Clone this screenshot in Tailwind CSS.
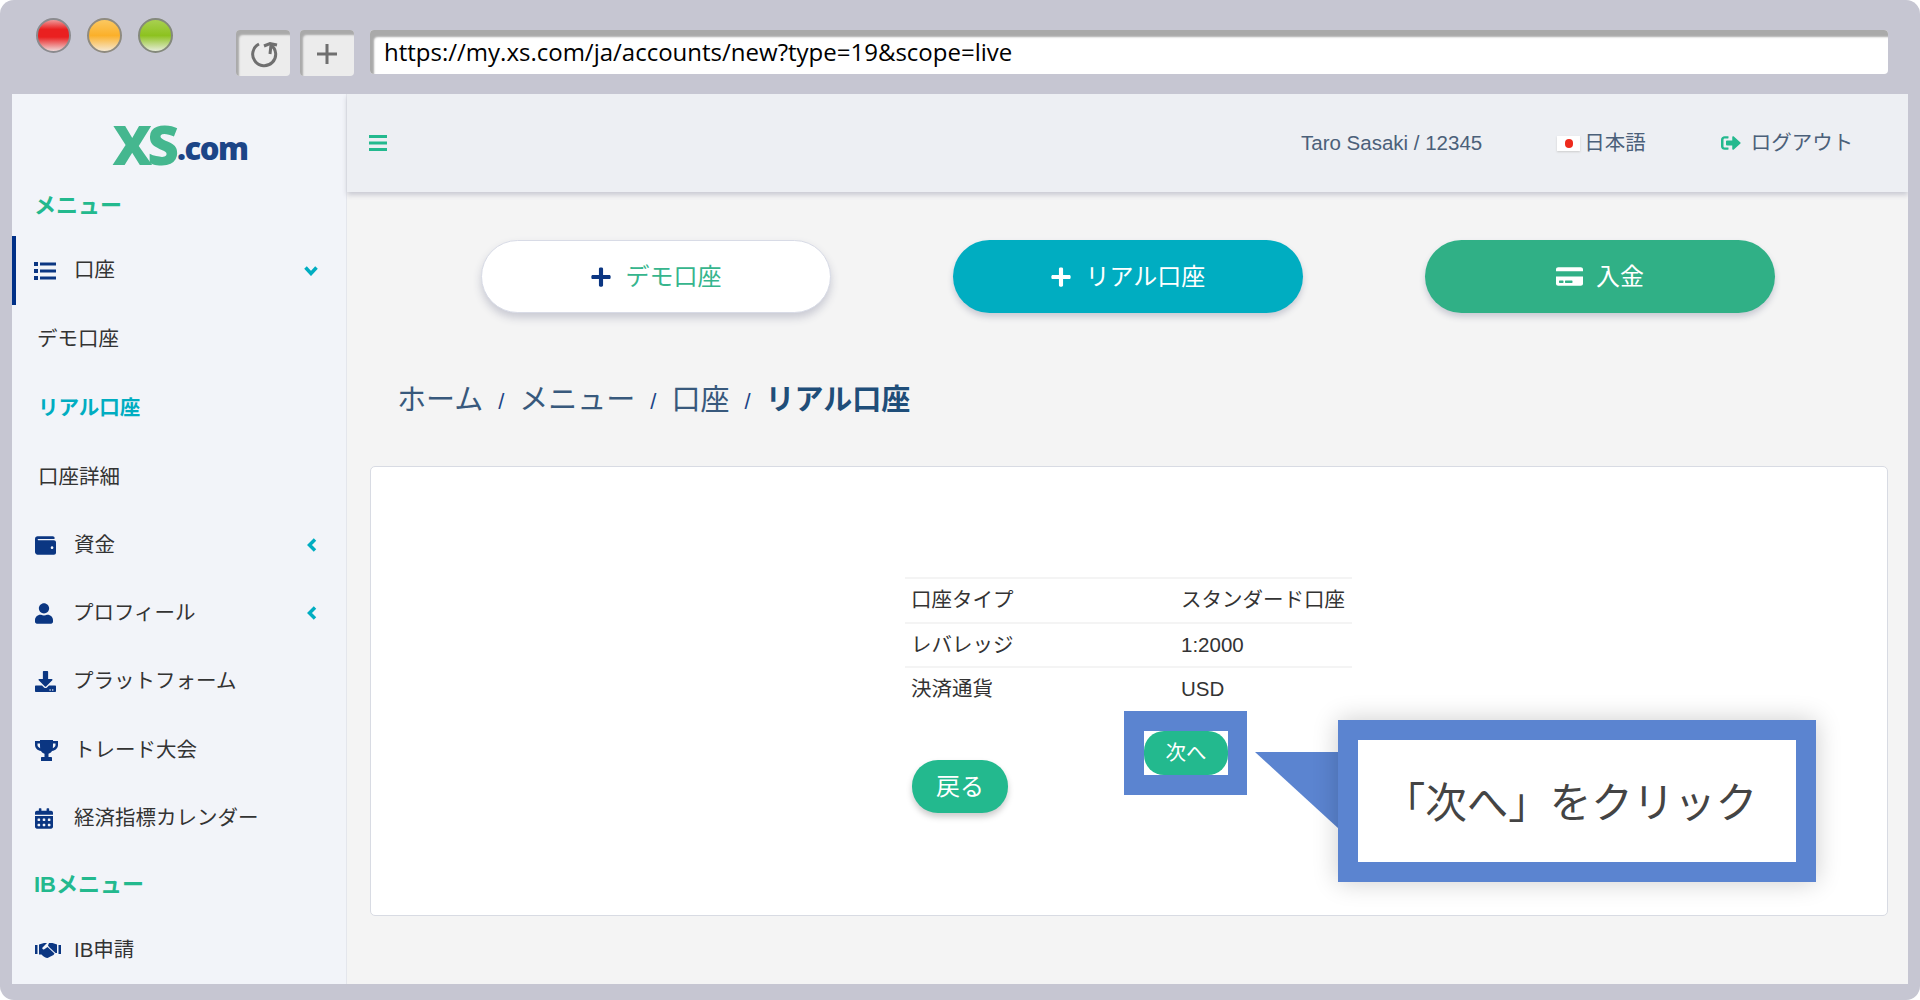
<!DOCTYPE html>
<html lang="ja">
  <head>
    <meta charset="UTF-8" />
    <title>XS.com</title>
    <script src="https://cdn.jsdelivr.net/npm/@tailwindcss/browser@4"></script>
  </head>
  <body class="bg-white font-['Liberation_Sans','Noto_Sans_CJK_JP',sans-serif]">
    <div class="w-[1920px] h-[1000px] bg-[#c6c6d2] rounded-[14px] overflow-hidden flex flex-col">
      <!-- browser chrome -->
      <div class="h-[94px] shrink-0 flex items-start relative">
        <div class="flex gap-[16px] ml-[36px] mt-[18px]">
          <div class="w-[35px] h-[35px] rounded-full border-2 border-[#8b8b8f] bg-[linear-gradient(#e99_0%,#ea2020_30%,#ea2020_55%,#f0d8d8_100%)]"></div>
          <div class="w-[35px] h-[35px] rounded-full border-2 border-[#8f8b80] bg-[linear-gradient(#fbc860_0%,#fbb02a_50%,#f6e8d0_100%)]"></div>
          <div class="w-[35px] h-[35px] rounded-full border-2 border-[#84897c] bg-[linear-gradient(#a8d050_0%,#8dc21f_50%,#e6ecd8_100%)]"></div>
        </div>
        <div class="ml-[63px] mt-[30px] w-[54px] h-[46px] rounded-[4px] bg-[#ececec] shadow-[inset_3px_5px_2px_#aaaaaa] flex items-center justify-center pt-[2px] pl-[3px]">
          <svg class="w-[32px] h-[32px]" viewBox="0 0 32 32" fill="none" stroke="#6f6f6f" stroke-width="3">
            <path d="M10 6A11.500 11.500 0 1 0 22 7l-1 9" />
            <path d="M15 8l6-2.500 7 1.500" />
          </svg>
        </div>
        <div class="ml-[10px] mt-[30px] w-[54px] h-[46px] rounded-[4px] bg-[#ececec] shadow-[inset_3px_5px_2px_#aaaaaa] flex items-center justify-center pt-[2px]">
          <svg class="w-[24px] h-[24px]" viewBox="0 0 24 24" fill="none" stroke="#6f6f6f" stroke-width="3">
            <path d="M12 2v20M2 12h20" />
          </svg>
        </div>
        <div class="ml-[16px] mt-[30px] w-[1518px] h-[44px] rounded-[4px] bg-white shadow-[inset_4px_7px_2px_#aaaaaa] flex items-center pl-[14px] font-['Open_Sans',sans-serif] text-[24px] text-black">
          https://my.xs.com/ja/accounts/new?type=19&amp;scope=live
        </div>
      </div>

      <div class="flex mx-[12px] h-[890px] shrink-0 overflow-hidden">
        <!-- sidebar -->
        <aside class="w-[335px] shrink-0 bg-[#f2f4f9] border-r border-[#e4e6ec] flex flex-col text-[20.5px] text-[#333333]">
          <div class="h-[91px] shrink-0 flex items-end justify-center pb-[21px] pl-[2px] font-['Open_Sans',sans-serif] font-extrabold leading-none">
            <span class="text-[55px] text-[#45b78f] tracking-[-5px] leading-[40px]">XS</span><span class="text-[31px] text-[#1c4587] tracking-[-1.5px] ml-[3px]">.com</span>
          </div>
          <div class="h-[40px] mb-[11px] shrink-0 flex items-center pl-[22px] text-[22px] font-bold text-[#23b98e]">メニュー</div>

          <div class="h-[69px] shrink-0 flex items-center border-l-4 border-[#003087] pl-[18px]">
            <svg class="w-[22px] h-[18px] mr-[18px]" viewBox="0 0 22 18" fill="#0b3682">
              <rect x="0" y="0" width="4" height="4" />
              <rect x="6" y="0.5" width="16" height="3" />
              <rect x="0" y="7" width="4" height="4" />
              <rect x="6" y="7.5" width="16" height="3" />
              <rect x="0" y="14" width="4" height="4" />
              <rect x="6" y="14.5" width="16" height="3" />
            </svg>
            <span>口座</span>
            <svg class="w-[14px] h-[10px] ml-auto mr-[28px]" viewBox="0 0 14 10" fill="none" stroke="#00adc1" stroke-width="3.5">
              <path d="M1.5 1.5L7 7.5l5.5-6" />
            </svg>
          </div>
          <div class="h-[68px] shrink-0 flex items-center pl-[25px]">デモ口座</div>
          <div class="h-[70px] shrink-0 flex items-center pl-[26px] font-bold text-[#00adc1]">リアル口座</div>
          <div class="h-[68px] shrink-0 flex items-center pl-[26px]">口座詳細</div>

          <div class="h-[68px] shrink-0 flex items-center pl-[23px]">
            <svg class="w-[21px] h-[21px] mr-[18px]" viewBox="0 0 512 512" fill="#0b3682">
              <path d="M461.2 128H80c-8.84 0-16-7.16-16-16s7.16-16 16-16h384c8.84 0 16-7.16 16-16 0-26.51-21.49-48-48-48H64C28.65 32 0 60.65 0 96v320c0 35.35 28.65 64 64 64h397.2c28.02 0 50.8-21.53 50.8-48V176c0-26.47-22.78-48-50.8-48zM416 340c-17.67 0-32-14.33-32-32s14.33-32 32-32 32 14.33 32 32-14.33 32-32 32z" />
            </svg>
            <span>資金</span>
            <svg class="w-[10px] h-[14px] ml-auto mr-[29px]" viewBox="0 0 10 14" fill="none" stroke="#00adc1" stroke-width="3.5">
              <path d="M8 1.5L2.500 7 8 12.500" />
            </svg>
          </div>
          <div class="h-[68px] shrink-0 flex items-center pl-[23px]">
            <svg class="w-[18px] h-[21px] mr-[20px]" viewBox="0 0 448 512" fill="#0b3682">
              <path d="M224 256c70.7 0 128-57.3 128-128S294.7 0 224 0 96 57.3 96 128s57.3 128 128 128zm89.6 32h-16.7c-22.2 10.2-46.9 16-72.9 16s-50.6-5.8-72.9-16h-16.7C60.2 288 0 348.2 0 422.4V464c0 26.5 21.5 48 48 48h352c26.5 0 48-21.5 48-48v-41.6c0-74.2-60.2-134.4-134.4-134.4z" />
            </svg>
            <span>プロフィール</span>
            <svg class="w-[10px] h-[14px] ml-auto mr-[29px]" viewBox="0 0 10 14" fill="none" stroke="#00adc1" stroke-width="3.5">
              <path d="M8 1.5L2.500 7 8 12.500" />
            </svg>
          </div>
          <div class="h-[69px] shrink-0 flex items-center pl-[23px]">
            <svg class="w-[21px] h-[21px] mr-[17px]" viewBox="0 0 512 512" fill="#0b3682">
              <path d="M216 0h80c13.3 0 24 10.7 24 24v168h87.7c17.8 0 26.7 21.5 14.1 34.1L269.7 378.3c-7.5 7.5-19.8 7.5-27.3 0L90.1 226.1c-12.6-12.6-3.7-34.1 14.1-34.1H192V24c0-13.3 10.7-24 24-24zm296 376v112c0 13.3-10.7 24-24 24H24c-13.3 0-24-10.7-24-24V376c0-13.3 10.7-24 24-24h146.7l49 49c20.1 20.1 52.5 20.1 72.6 0l49-49H488c13.3 0 24 10.7 24 24zm-124 88c0-11-9-20-20-20s-20 9-20 20 9 20 20 20 20-9 20-20zm64 0c0-11-9-20-20-20s-20 9-20 20 9 20 20 20 20-9 20-20z" />
            </svg>
            <span>プラットフォーム</span>
          </div>
          <div class="h-[68px] shrink-0 flex items-center pl-[23px]">
            <svg class="w-[23px] h-[21px] mr-[16px]" viewBox="0 0 23 21" fill="#0b3682">
              <path d="M5 0h13v1h5v4c0 3-2.500 5.500-6 6-.8 1.300-2 2.300-3.500 2.700V17H16c.6 0 1 .4 1 1v3H6v-3c0-.6.4-1 1-1h2.500v-3.300C8 13.300 6.800 12.300 6 11 2.500 10.500 0 8 0 5V1h5V0zM2.500 3.500V5c0 1.300 1 2.500 2.700 3.200C5 7 5 5 5 3.500H2.500zm18 0H18c0 1.500 0 3.500-.2 4.700C19.500 7.500 20.500 6.300 20.500 5V3.500z" />
            </svg>
            <span>トレード大会</span>
          </div>
          <div class="h-[68px] shrink-0 flex items-center pl-[23px]">
            <svg class="w-[18px] h-[21px] mr-[21px]" viewBox="0 0 448 512" fill="#0b3682">
              <path d="M0 464c0 26.500 21.500 48 48 48h352c26.500 0 48-21.500 48-48V192H0v272zm320-196c0-6.600 5.400-12 12-12h40c6.600 0 12 5.400 12 12v40c0 6.600-5.400 12-12 12h-40c-6.600 0-12-5.400-12-12v-40zm0 128c0-6.600 5.400-12 12-12h40c6.600 0 12 5.400 12 12v40c0 6.600-5.400 12-12 12h-40c-6.600 0-12-5.400-12-12v-40zM192 268c0-6.600 5.400-12 12-12h40c6.600 0 12 5.400 12 12v40c0 6.600-5.400 12-12 12h-40c-6.600 0-12-5.400-12-12v-40zm0 128c0-6.600 5.400-12 12-12h40c6.600 0 12 5.400 12 12v40c0 6.600-5.400 12-12 12h-40c-6.600 0-12-5.400-12-12v-40zM64 268c0-6.600 5.400-12 12-12h40c6.600 0 12 5.400 12 12v40c0 6.600-5.400 12-12 12H76c-6.600 0-12-5.400-12-12v-40zm0 128c0-6.600 5.400-12 12-12h40c6.600 0 12 5.400 12 12v40c0 6.600-5.400 12-12 12H76c-6.600 0-12-5.400-12-12v-40zM400 64h-48V16c0-8.800-7.200-16-16-16h-32c-8.800 0-16 7.200-16 16v48H160V16c0-8.800-7.200-16-16-16h-32c-8.800 0-16 7.200-16 16v48H48C21.500 64 0 85.500 0 112v48h448v-48c0-26.500-21.500-48-48-48z" />
            </svg>
            <span>経済指標カレンダー</span>
          </div>
          <div class="h-[65px] shrink-0 flex items-center pl-[22px] text-[22px] font-bold text-[#23b98e]">IBメニュー</div>
          <div class="h-[66px] shrink-0 flex items-center pl-[23px]">
            <svg class="w-[26px] h-[16px] mr-[13px]" viewBox="0 0 26 16" fill="#0b3682">
              <rect x="0" y="3" width="2.500" height="9" />
              <rect x="23.500" y="3" width="2.500" height="9" />
              <path d="M4 2.500L9 1h3L7.500 5.500c-.8 1 .5 2.500 1.800 1.700L12.500 5l7 6.500-1 1.500-6 3c-2 0-4-1.500-6-3.500H4V2.500z" />
              <path d="M14 1h3.500L22 2.500v8.500h-1.500L14 5l-1-1.500z" />
            </svg>
            <span>IB申請</span>
          </div>
        </aside>

        <!-- main -->
        <main class="flex-1 min-w-0 bg-[#f4f4f4] flex flex-col">
          <header class="h-[98px] shrink-0 bg-[#edeff3] shadow-[0_3px_5px_#c9cad3] flex items-center text-[20.5px] text-[#4b6079] relative z-10">
            <svg class="w-[18px] h-[16px] ml-[22px]" viewBox="0 0 18 16" fill="#23b98e">
              <rect y="0" width="18" height="3" />
              <rect y="6.500" width="18" height="3" />
              <rect y="13" width="18" height="3" />
            </svg>
            <span class="ml-[914px]">Taro Sasaki / 12345</span>
            <span class="ml-[75px] w-[23px] h-[15px] bg-white shadow-[0_1px_2px_#cccccc] flex items-center justify-center">
              <span class="w-[8px] h-[9px] rounded-full bg-[#ee2a1c] blur-[0.5px]"></span>
            </span>
            <span class="ml-[4px]">日本語</span>
            <svg class="w-[20px] h-[18px] ml-[75px]" viewBox="0 0 512 512" preserveAspectRatio="none" fill="#23b98e">
              <path d="M497 273L329 441c-15 15-41 4.500-41-17v-96H152c-13.300 0-24-10.700-24-24v-96c0-13.300 10.700-24 24-24h136V88c0-21.400 25.900-32 41-17l168 168c9.300 9.400 9.300 24.600 0 34zM192 436v-40c0-6.600-5.400-12-12-12H96c-17.700 0-32-14.300-32-32V160c0-17.700 14.300-32 32-32h84c6.600 0 12-5.400 12-12V76c0-6.600-5.400-12-12-12H96c-53 0-96 43-96 96v192c0 53 43 96 96 96h84c6.600 0 12-5.400 12-12z" />
            </svg>
            <span class="ml-[10px]">ログアウト</span>
          </header>

          <div class="flex gap-[122px] pl-[134px] mt-[48px] text-[24px]">
            <div class="w-[350px] h-[73px] rounded-full bg-white border border-[#d8dbe6] shadow-[0_5px_8px_#c9cad3] flex items-center justify-center gap-[15px] text-[#36b58d]">
              <svg class="w-[20px] h-[22px]" viewBox="0 0 448 512" fill="#0b3682">
                <path d="M416 208H272V64c0-17.670-14.330-32-32-32h-32c-17.670 0-32 14.330-32 32v144H32c-17.670 0-32 14.330-32 32v32c0 17.670 14.330 32 32 32h144v144c0 17.670 14.330 32 32 32h32c17.670 0 32-14.330 32-32V304h144c17.670 0 32-14.330 32-32v-32c0-17.670-14.330-32-32-32z" />
              </svg>
              <span>デモ口座</span>
            </div>
            <div class="w-[350px] h-[73px] rounded-full bg-[#00adc1] shadow-[0_4px_6px_#c9cad3] flex items-center justify-center gap-[15px] text-white">
              <svg class="w-[20px] h-[22px]" viewBox="0 0 448 512" fill="#ffffff">
                <path d="M416 208H272V64c0-17.670-14.330-32-32-32h-32c-17.670 0-32 14.330-32 32v144H32c-17.670 0-32 14.330-32 32v32c0 17.670 14.330 32 32 32h144v144c0 17.670 14.330 32 32 32h32c17.670 0 32-14.330 32-32V304h144c17.670 0 32-14.330 32-32v-32c0-17.670-14.330-32-32-32z" />
              </svg>
              <span>リアル口座</span>
            </div>
            <div class="w-[350px] h-[73px] rounded-full bg-[#30b086] shadow-[0_4px_6px_#c9cad3] flex items-center justify-center gap-[13px] text-white">
              <svg class="w-[27px] h-[21px]" viewBox="0 0 576 512" preserveAspectRatio="none" fill="#ffffff">
                <path d="M0 432c0 26.500 21.500 48 48 48h480c26.500 0 48-21.500 48-48V256H0v176zm192-68c0-6.600 5.400-12 12-12h136c6.600 0 12 5.400 12 12v40c0 6.600-5.400 12-12 12H204c-6.600 0-12-5.400-12-12v-40zm-128 0c0-6.600 5.400-12 12-12h72c6.600 0 12 5.400 12 12v40c0 6.600-5.400 12-12 12H76c-6.600 0-12-5.400-12-12v-40zM576 80v48H0V80c0-26.500 21.500-48 48-48h480c26.500 0 48 21.500 48 48z" />
              </svg>
              <span>入金</span>
            </div>
          </div>

          <nav class="flex items-center h-[60px] mt-[58px] pl-[50px] text-[29px] text-[#38597c]">
            <span>ホーム</span>
            <span class="mx-[15px] text-[22px] text-[#1c4587]">/</span>
            <span>メニュー</span>
            <span class="mx-[15px] text-[22px] text-[#1c4587]">/</span>
            <span>口座</span>
            <span class="mx-[15px] text-[22px] text-[#1c4587]">/</span>
            <span class="font-bold text-[#1f4e79]">リアル口座</span>
          </nav>

          <!-- card -->
          <section class="relative ml-[23px] mt-[35px] w-[1518px] h-[450px] bg-white border border-[#d8dbe3] rounded-[5px] pt-[110px] pl-[534px] text-[20.5px] text-[#333333]">
            <table class="w-[447px] border-collapse">
              <tbody>
                <tr class="h-[45px] border-t-2 border-[#f4f4f4]">
                  <td class="pl-[6px] w-[276px]">口座タイプ</td>
                  <td>スタンダード口座</td>
                </tr>
                <tr class="h-[44px] border-t-2 border-[#f4f4f4]">
                  <td class="pl-[6px]">レバレッジ</td>
                  <td>1:2000</td>
                </tr>
                <tr class="h-[44px] border-t-2 border-[#f4f4f4]">
                  <td class="pl-[6px]">決済通貨</td>
                  <td>USD</td>
                </tr>
              </tbody>
            </table>
            <div class="flex items-start ml-[7px]">
              <div class="mt-[49px] w-[96px] h-[53px] rounded-[26px] bg-[#23b98e] shadow-[0_4px_6px_#cccccc] flex items-center justify-center text-[24px] text-white">戻る</div>
              <div class="ml-[116px] w-[123px] h-[84px] border-y-[20px] border-l-[20px] border-r-[19px] border-[#5b84d0] bg-white">
                <div class="w-full h-full rounded-[20px] bg-[#23b98e] flex items-center justify-center text-white">次へ</div>
              </div>
            </div>

            <!-- callout -->
            <svg class="absolute left-[884px] top-[285px] w-[84px] h-[77px]" viewBox="0 0 84 77" fill="#5b84d0">
              <path d="M0 0H84V77z" />
            </svg>
            <div class="absolute left-[967px] top-[253px] w-[478px] h-[162px] bg-white border-[20px] border-[#5b84d0] shadow-[0_0_24px_#00000033] flex items-center justify-center pt-[6px] pr-[13px] text-[41.5px] text-[#444444]">「次へ」をクリック</div>
          </section>
        </main>
      </div>
    </div>
  </body>
</html>
